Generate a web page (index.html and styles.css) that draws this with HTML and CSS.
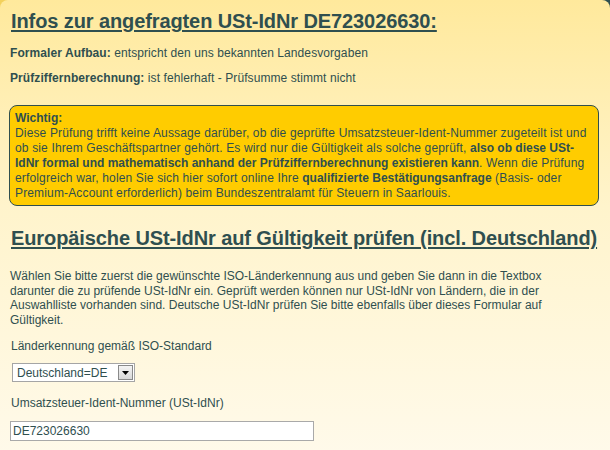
FILE: index.html
```html
<!DOCTYPE html>
<html lang="de">
<head>
  <meta charset="UTF-8" />
  <title>USt-IdNr prüfen</title>
  <link rel="stylesheet" href="styles.css">
</head>
<body>
  <div class="content">
    <h1>Infos zur angefragten USt-IdNr DE723026630:</h1>
    <p class="result"><b>Formaler Aufbau:</b> entspricht den uns bekannten Landesvorgaben</p>
    <p class="result"><b>Prüfziffernberechnung:</b> ist fehlerhaft - Prüfsumme stimmt nicht</p>

    <div class="notice">
      <b>Wichtig:</b><br>
      Diese Prüfung trifft keine Aussage darüber, ob die geprüfte Umsatzsteuer-Ident-Nummer zugeteilt ist und ob sie Ihrem Geschäftspartner gehört. Es wird nur die Gültigkeit als solche geprüft, <b>also ob diese USt-IdNr formal und mathematisch anhand der Prüfziffernberechnung existieren kann</b>. Wenn die Prüfung erfolgreich war, holen Sie sich hier sofort online Ihre <b>qualifizierte Bestätigungsanfrage</b> (Basis- oder Premium-Account erforderlich) beim Bundeszentralamt für Steuern in Saarlouis.
    </div>

    <h1 class="section">Europäische USt-IdNr auf Gültigkeit prüfen (incl. Deutschland)</h1>
    <p class="intro">Wählen Sie bitte zuerst die gewünschte ISO-Länderkennung aus und geben Sie dann in die Textbox darunter die zu prüfende USt-IdNr ein. Geprüft werden können nur USt-IdNr von Ländern, die in der Auswahlliste vorhanden sind. Deutsche USt-IdNr prüfen Sie bitte ebenfalls über dieses Formular auf Gültigkeit.</p>

    <form class="check-form">
      <label for="land">Länderkennung gemäß ISO-Standard</label>
      <div class="select-wrap">
        <select id="land">
          <option>Deutschland=DE</option>
        </select>
        <span class="select-btn">
          <svg width="7" height="4" viewBox="0 0 7 4"><path d="M0 0h7L3.5 4z" fill="#000"/></svg>
        </span>
      </div>
      <label for="ustid">Umsatzsteuer-Ident-Nummer (USt-IdNr)</label>
      <input type="text" id="ustid" value="DE723026630">
    </form>
  </div>
</body>
</html>
```

FILE: styles.css
```css
body {
  margin: 0;
  background: linear-gradient(to right, #f3d15c 50%, #2f4f4f 50%);
  font-family: "Liberation Sans", Arial, sans-serif;
  font-size: 12px;
  color: #2f4f4f;
}

.content {
  min-height: 450px;
  box-sizing: border-box;
  padding: 10px 10px 20px 10px;
  border-radius: 8px 8px 0 0;
  background: linear-gradient(to bottom, #ffe99c 0%, #fff4cc 45%, #fffaeb 100%);
}

h1 {
  margin: 0 0 0 1px;
  font-size: 20px;
  line-height: 23px;
  letter-spacing: -0.1px;
  white-space: nowrap;
  text-decoration: underline;
  text-underline-offset: 2px;
}

p {
  margin: 0;
}

.result {
  line-height: 15px;
  margin-top: 10px;
  letter-spacing: 0.08px;
}

.result:first-of-type {
  margin-top: 13px;
}

.notice {
  margin: 19px 1px 0 -1px;
  padding: 5px 5px 4px 5px;
  line-height: 15px;
  letter-spacing: 0.15px;
  background: #ffcc00;
  border: 1px solid #2f4f4f;
  border-radius: 8px;
}

.notice b {
  letter-spacing: 0;
}

.section {
  margin-top: 21px;
}

.intro {
  margin-top: 19px;
  line-height: 14.5px;
  padding-right: 20px;
}

.check-form {
  display: flex;
  flex-direction: column;
  align-items: flex-start;
  margin-top: 12px;
}

.check-form label {
  line-height: 15px;
  margin-left: 1px;
}

.select-wrap {
  position: relative;
  margin: 9px 0 14px 2px;
}

.select-wrap select {
  appearance: none;
  width: 123px;
  height: 19px;
  margin: 0;
  padding: 0 0 0 4px;
  border: 1px solid #a5a5a5;
  background: #fff;
  font: inherit;
  font-size: 12px;
  color: #2f4f4f;
}

.select-btn {
  position: absolute;
  right: 2px;
  top: 2px;
  width: 15px;
  height: 15px;
  box-sizing: border-box;
  border: 1px solid #8a8a8a;
  background: linear-gradient(#f4f4f4, #d8d8d8);
  display: flex;
  align-items: center;
  justify-content: center;
}

.check-form input {
  margin: 10px 0 0 0;
  width: 304px;
  height: 20px;
  box-sizing: border-box;
  padding: 0 2px;
  border: 1px solid #a9a9a9;
  background: #fff;
  font: inherit;
  font-size: 12px;
  color: #2f4f4f;
}
```
